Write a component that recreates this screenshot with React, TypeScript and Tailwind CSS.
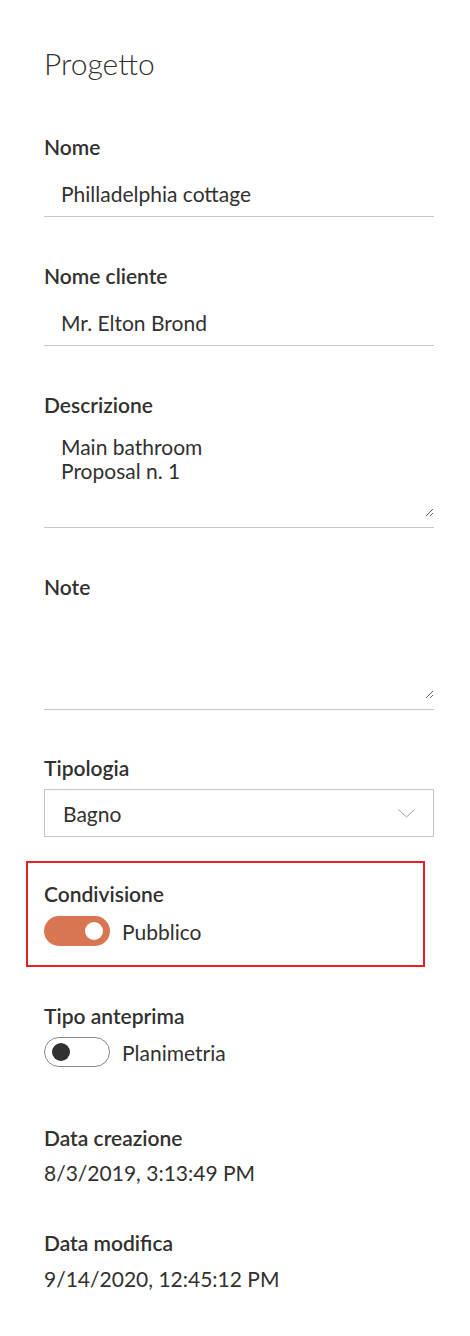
type FieldProps = { label: string; value: string };

const Label = ({ children, className = "" }: { children: string; className?: string }) => (
  <div className={`text-[21px] leading-[25px] font-semibold text-[#323130] ${className}`}>{children}</div>
);

const UnderlinedInput = ({ label, value }: FieldProps) => (
  <div className="flex flex-col">
    <Label>{label}</Label>
    <div className="mt-[12px] border-b border-[#c8c6c4]">
      <input
        readOnly
        value={value}
        className="h-[45px] w-full bg-transparent pl-[17px] text-[21px] leading-[25px] text-[#323130] outline-none"
      />
    </div>
  </div>
);

const UnderlinedTextarea = ({ label, value }: FieldProps) => (
  <div className="flex flex-col">
    <Label>{label}</Label>
    <div className="mt-[12px] border-b border-[#c8c6c4] pb-[10px]">
      <textarea
        readOnly
        value={value}
        className="block h-[88px] w-full resize-y bg-transparent pl-[17px] pt-[6px] text-[21px] leading-[24px] text-[#323130] outline-none"
      />
    </div>
  </div>
);

const Toggle = ({ on, text }: { on: boolean; text: string }) => (
  <div className="flex items-center">
    {on ? (
      <div className="flex h-[30px] w-[66px] items-center justify-end rounded-full bg-[#d97652] pr-[7px]">
        <div className="h-[18px] w-[18px] rounded-full bg-white" />
      </div>
    ) : (
      <div className="flex h-[30px] w-[66px] items-center rounded-full border border-[#8a8886] bg-white pl-[7px]">
        <div className="h-[18px] w-[18px] rounded-full bg-[#323130]" />
      </div>
    )}
    <span className="ml-[12px] text-[21px] leading-[25px] text-[#323130]">{text}</span>
  </div>
);

export default function App() {
  return (
    <div className="min-h-[1336px] w-[470px] bg-white pl-[44px] pr-[36px] pt-[45px] font-[Lato,sans-serif]">
      <h1 className="text-[30px] leading-[36px] font-light text-[#323130]">Progetto</h1>

      <div className="mt-[53px] flex flex-col gap-[46px]">
        <UnderlinedInput label="Nome" value="Philladelphia cottage" />
        <UnderlinedInput label="Nome cliente" value="Mr. Elton Brond" />
        <UnderlinedTextarea label="Descrizione" value={"Main bathroom\nProposal n. 1"} />
        <UnderlinedTextarea label="Note" value="" />
      </div>

      <div className="mt-[45px] flex flex-col">
        <Label>Tipologia</Label>
        <div className="mt-[9px] flex h-[48px] items-center justify-between border border-[#c8c6c4] pl-[18px] pr-[18px]">
          <span className="text-[21px] leading-[25px] text-[#323130]">Bagno</span>
          <svg width="17" height="9" viewBox="0 0 17 9" fill="none">
            <path d="M0.5 0.5 L8.5 8 L16.5 0.5" stroke="#a19f9d" strokeWidth="1" />
          </svg>
        </div>
      </div>

      <div className="-ml-[18px] mt-[24px] w-[399px] border-2 border-[#e81c24] pb-[19px] pl-[16px] pt-[18px]">
        <Label>Condivisione</Label>
        <div className="mt-[10px]">
          <Toggle on text="Pubblico" />
        </div>
      </div>

      <div className="mt-[36px]">
        <Label>Tipo anteprima</Label>
        <div className="mt-[9px]">
          <Toggle on={false} text="Planimetria" />
        </div>
      </div>

      <div className="mt-[58px]">
        <Label>Data creazione</Label>
        <div className="mt-[10px] text-[21px] leading-[25px] text-[#323130]">8/3/2019, 3:13:49 PM</div>
      </div>

      <div className="mt-[45px]">
        <Label>Data modifica</Label>
        <div className="mt-[11px] text-[21px] leading-[25px] text-[#323130]">9/14/2020, 12:45:12 PM</div>
      </div>
    </div>
  );
}
